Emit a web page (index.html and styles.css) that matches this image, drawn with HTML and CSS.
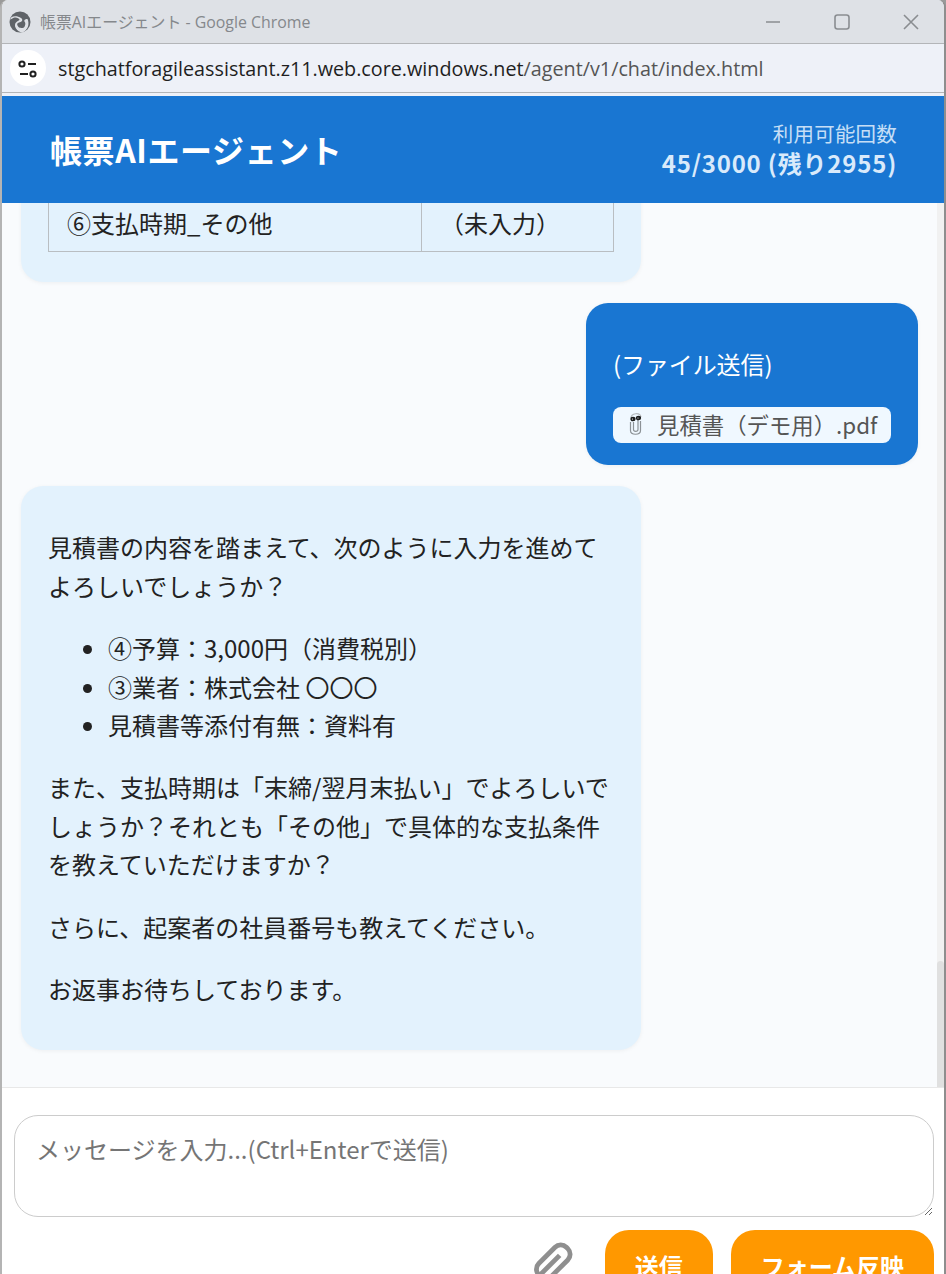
FILE: index.html
```html
<!DOCTYPE html>
<html lang="ja">
    <head>
        <meta charset="utf-8">
        <title>帳票AIエージェント</title>
        <link rel="stylesheet" href="styles.css">
    </head>
    <body>
        <div id="window">
            <div class="titlebar">
                <svg class="globe" width="22" height="22" viewBox="0 0 22 22">
                    <circle cx="11" cy="11" r="10.500" fill="#5f6368"/>
                    <path d="M2 6.500C5 4.500 9 5 12 7c2 1.300 1.500 3.500-.5 4s-4 1-3 3.500 3.500 2.500 5 2.500 2-1 2.500-2.500.5-2.500-.5-4 1.500-3 3-2.500c1 2 1.300 5 .5 7.500-.8 2.500-3 5-5.500 6-3-.5-5-1.500-6.500-4s-1.500-5 .5-6.500 3-1.500 3-2.500-3-2.500-5-2-4 2.500-4.500 2z" fill="#dee1e6"/>
                </svg>
                <span class="wintitle">帳票AIエージェント - Google Chrome</span>
                <div class="winbuttons">
                    <svg width="16" height="16" viewBox="0 0 16 16"><path d="M1 8h14" stroke="#8a8d91" stroke-width="1.600"/></svg>
                    <svg width="16" height="16" viewBox="0 0 16 16"><rect x="1" y="1" width="14" height="14" rx="2.500" fill="none" stroke="#8a8d91" stroke-width="1.600"/></svg>
                    <svg width="16" height="16" viewBox="0 0 16 16"><path d="M1 1l14 14M15 1L1 15" stroke="#8a8d91" stroke-width="1.600"/></svg>
                </div>
            </div>
            <div class="urlbar">
                <div class="siteinfo">
                    <svg width="20" height="20" viewBox="0 0 20 20" fill="none" stroke="#1f1f1f" stroke-width="2">
                        <circle cx="4" cy="6" r="2.600"/>
                        <path d="M10 6h8M2 16h8"/>
                        <circle cx="15" cy="16" r="2.600"/>
                    </svg>
                </div>
                <span class="url">stgchatforagileassistant.z11.web.core.windows.net<span class="urlpath">/agent/v1/chat/index.html</span></span>
            </div>

            <div id="app">
                <header class="appheader">
                    <h1>帳票AIエージェント</h1>
                    <div class="usage">
                        <div class="usage-label">利用可能回数</div>
                        <div class="usage-count">45/3000 (残り2955)</div>
                    </div>
                </header>

                <div id="chat">
                    <div class="bubble bot">
                        <table>
                            <tr><td>⑥支払時期_その他</td><td>（未入力）</td></tr>
                        </table>
                    </div>

                    <div class="bubble user">
                        <p>(ファイル送信)</p>
                        <div class="filechip">
                            <svg class="clippy" width="16" height="24" viewBox="0 0 16 24" fill="none" stroke="#8c9296" stroke-width="1.200">
                                <path d="M2.500 10v8.500c0 5 10 5 10 0V9"/>
                                <path d="M5.500 10v7.500c0 2.500 4.500 2.500 4.500 0V8"/>
                                <path d="M3 6c0-5 9-6 10-1" stroke="#b5b9bc"/>
                                <ellipse cx="5" cy="7" rx="2.600" ry="2.300" fill="#1c1c1c" stroke="none"/>
                                <ellipse cx="10.500" cy="6" rx="2.600" ry="2.300" fill="#1c1c1c" stroke="none"/>
                                <circle cx="4.500" cy="7" r=".6" fill="#fff" stroke="none"/>
                                <circle cx="10" cy="6" r=".6" fill="#fff" stroke="none"/>
                            </svg>
                            <span>見積書（デモ用）.pdf</span>
                        </div>
                    </div>

                    <div class="bubble bot">
                        <p>見積書の内容を踏まえて、次のように入力を進めてよろしいでしょうか？</p>
                        <ul>
                            <li>④予算：3,000円（消費税別）</li>
                            <li>③業者：株式会社 〇〇〇</li>
                            <li>見積書等添付有無：資料有</li>
                        </ul>
                        <p>また、支払時期は「末締/翌月末払い」でよろしいでしょうか？それとも「その他」で具体的な支払条件を教えていただけますか？</p>
                        <p>さらに、起案者の社員番号も教えてください。</p>
                        <p>お返事お待ちしております。</p>
                    </div>
                    <div class="scrollthumb"></div>
                </div>

                <div id="inputarea">
                    <textarea placeholder="メッセージを入力...(Ctrl+Enterで送信)"></textarea>
                    <div class="actions">
                        <svg class="attach" width="44" height="44" viewBox="0 0 44 44" fill="none">
                            <g transform="translate(22 22) rotate(45)" stroke="#8f8f8f" stroke-width="4.800">
                                <rect x="-9" y="-18.500" width="18" height="39" rx="8"/>
                                <path d="M0 -8V20"/>
                            </g>
                        </svg>
                        <button>送信</button>
                        <button>フォーム反映</button>
                    </div>
                </div>
            </div>
        </div>
    </body>
</html>
```

FILE: styles.css
```css
html, body{
    margin:0;
    height:100%;
    overflow:hidden;
}
html{
    background:#9a9a9a;
}
body{
    font-family:"Noto Sans CJK JP", "Noto Sans", sans-serif;
    color:#222;
}
#window{
    height:1274px;
    display:flex;
    flex-direction:column;
    box-sizing:border-box;
    position:relative;
    overflow:hidden;
    border-left:2px solid #b4b4b4;
    border-right:2px solid #8e8e8e;
    border-radius:8px 8px 0 0;
    background:#eef1f8;
}
/* bits of the window behind, showing along the left edge */
#window::before{
    content:"";
    position:absolute;
    top:0;
    left:-2px;
    width:2px;
    height:100%;
    background:
        linear-gradient(#2f5590, #2f5590) 0 612px / 2px 3px no-repeat,
        linear-gradient(#2f5590, #2f5590) 0 695px / 2px 5px no-repeat,
        linear-gradient(#2f5590, #2f5590) 0 770px / 2px 5px no-repeat,
        linear-gradient(#2f5590, #2f5590) 0 785px / 2px 3px no-repeat,
        linear-gradient(#2f5590, #2f5590) 0 1052px / 2px 4px no-repeat,
        linear-gradient(#555, #555) 0 145px / 2px 58px no-repeat;
}

/* browser chrome */
.titlebar{
    height:44px;
    box-sizing:border-box;
    flex:none;
    display:flex;
    align-items:center;
    padding-left:7px;
    background:#dee1e6;
    border-bottom:1px solid #b3b5b8;
}
.globe{
    flex:none;
}
.wintitle{
    margin-left:9px;
    font-family:"Open Sans", "Noto Sans CJK JP", sans-serif;
    font-size:15.900px;
    color:#85888c;
}
.winbuttons{
    margin-left:auto;
    margin-right:25px;
    display:flex;
    gap:53px;
}
.urlbar{
    height:49px;
    flex:none;
    display:flex;
    align-items:center;
    padding-left:8px;
    border-bottom:1px solid #b3b5b8;
    box-sizing:border-box;
}
.siteinfo{
    width:36px;
    height:36px;
    border-radius:50%;
    background:#fff;
    display:flex;
    align-items:center;
    justify-content:center;
}
.url{
    margin-left:12px;
    font-family:"Open Sans", sans-serif;
    font-size:19.750px;
    color:#1f1f1f;
    white-space:nowrap;
}
.urlpath{
    color:#555;
}

/* app */
#app{
    flex:1;
    min-height:0;
    margin-top:3px;
    display:flex;
    flex-direction:column;
}
.appheader{
    height:107px;
    flex:none;
    display:flex;
    align-items:center;
    justify-content:space-between;
    padding:0 47px 2px 48px;
    box-sizing:border-box;
    background:#1976d2;
    color:#fff;
}
h1{
    margin:0;
    font-size:32px;
    font-weight:700;
    letter-spacing:.6px;
    white-space:nowrap;
}
.usage{
    text-align:right;
    color:#d9eafb;
    white-space:nowrap;
}
.usage-label{
    font-size:20.500px;
    line-height:28px;
    letter-spacing:.2px;
    opacity:.9;
}
.usage-count{
    font-size:24px;
    font-weight:700;
    line-height:31px;
    letter-spacing:.8px;
}

#chat{
    height:884px;
    flex:none;
    box-sizing:border-box;
    position:relative;
    overflow:hidden;
    display:flex;
    flex-direction:column;
    justify-content:flex-end;
    gap:21px;
    padding:0 26px 37px 19px;
    background:#f9fbfd;
    box-shadow:inset -7px 0 0 #f1f1f1;
}
.scrollthumb{
    position:absolute;
    right:0;
    bottom:0;
    width:7px;
    height:126px;
    border-radius:4px 4px 0 0;
    background:#e0e0e0;
}
.bubble{
    flex:none;
    box-sizing:border-box;
    border-radius:22px;
    font-size:24px;
    line-height:38.400px;
    box-shadow:0 1px 4px rgba(0,0,0,.05);
}
.bubble p{
    margin:24px 0;
}
.bot{
    width:620px;
    padding:18.400px 28px 17.600px 27px;
    background:#e3f2fd;
}
.user{
    align-self:flex-end;
    width:332px;
    padding:18px 27px 22px 27px;
    background:#1976d2;
    color:#fff;
}
.user p{
    margin:24px 0 23.600px;
    letter-spacing:-.1px;
}
.bubble ul{
    margin:24px 0;
    padding-left:60px;
}
table{
    width:566px;
    border-collapse:collapse;
    margin-bottom:12.400px;
}
td{
    border:1px solid #b9bec2;
    padding:8.500px 18px;
}
td:first-child{
    width:336px;
}
.filechip{
    display:flex;
    align-items:center;
    height:36px;
    box-sizing:border-box;
    padding:0 0 2px 15px;
    border-radius:8px;
    background:#f0f8ff;
    color:#555;
    font-size:22.400px;
    white-space:nowrap;
}
.filechip span{
    margin-left:13px;
}
.clippy{
    flex:none;
}

#inputarea{
    flex:1;
    min-height:0;
    box-sizing:border-box;
    padding:27px 10px 0 12px;
    background:#fff;
    border-top:1px solid #e8e8e8;
}
textarea{
    display:block;
    width:100%;
    height:102px;
    box-sizing:border-box;
    padding:16px 21px;
    border:1px solid #ccc;
    border-radius:24px;
    font-family:inherit;
    font-size:24px;
    line-height:34px;
    background:#fff;
    outline:none;
}
textarea::placeholder{
    color:#757575;
}
.actions{
    display:flex;
    justify-content:flex-end;
    align-items:flex-start;
    gap:18px;
    margin-top:13px;
}
.attach{
    flex:none;
    margin:9px 11px 0 0;
}
button{
    height:70px;
    padding:0 30px;
    border:none;
    border-radius:24px;
    background:#ff9800;
    color:#fff;
    font-family:inherit;
    font-size:24px;
    font-weight:700;
    flex:none;
}
```
